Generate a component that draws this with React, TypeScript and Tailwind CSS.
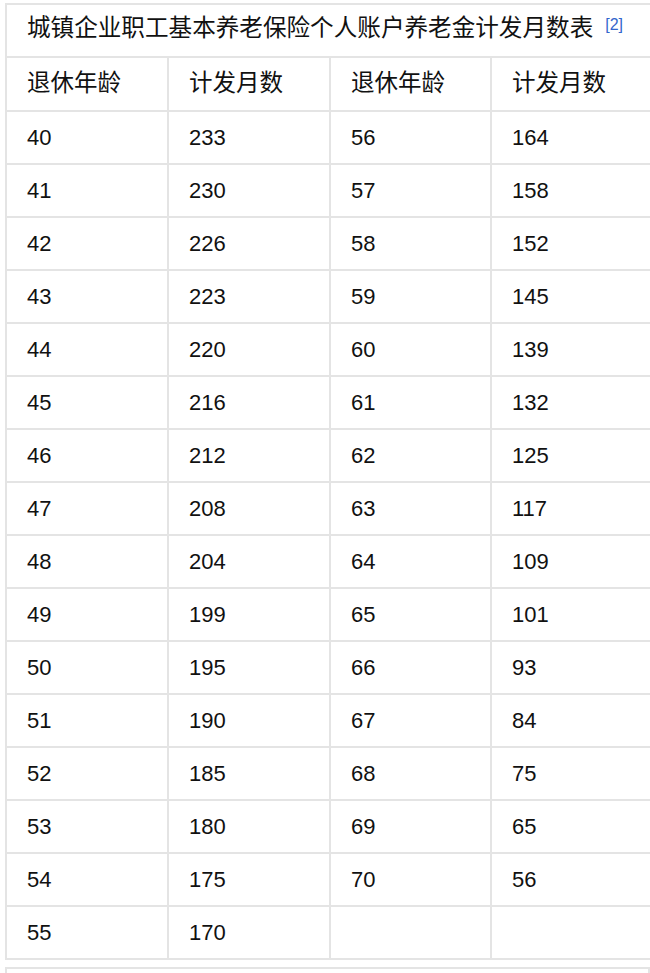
import React from "react";

const left = [
  ["40", "233"], ["41", "230"], ["42", "226"], ["43", "223"], ["44", "220"], ["45", "216"],
  ["46", "212"], ["47", "208"], ["48", "204"], ["49", "199"], ["50", "195"], ["51", "190"],
  ["52", "185"], ["53", "180"], ["54", "175"], ["55", "170"],
];
const right = [
  ["56", "164"], ["57", "158"], ["58", "152"], ["59", "145"], ["60", "139"], ["61", "132"],
  ["62", "125"], ["63", "117"], ["64", "109"], ["65", "101"], ["66", "93"], ["67", "84"],
  ["68", "75"], ["69", "65"], ["70", "56"], ["", ""],
];

const cell = "border-2 border-[#e4e4e4] h-[53px] pl-[20px] pr-2 align-middle text-left font-normal";
const head = cell + " h-[54px] text-[23.5px]";

export default function App() {
  return (
    <div
      className="w-[650px] h-[973px] overflow-hidden bg-white text-[#111] text-[22px] leading-none pt-[3px] pl-[5px]"
      style={{ fontFamily: '"Liberation Sans", Arial, "Noto Sans CJK SC", sans-serif' }}
    >
      <table className="border-collapse table-fixed w-[650px] border-2 border-[#e4e4e4]">
        <colgroup>
          <col className="w-[162px]" />
          <col className="w-[162px]" />
          <col className="w-[161px]" />
          <col className="w-[165px]" />
        </colgroup>
        <tbody>
          <tr>
            <td colSpan={4} className={cell + " h-[52px] whitespace-nowrap pb-[3px]"}>
              <span className="text-[23.6px]">城镇企业职工基本养老保险个人账户养老金计发月数表</span>
              <sup className="ml-[12px] text-[16px] text-[#3366cc] relative top-[-6px]">[2]</sup>
            </td>
          </tr>
          <tr>
            <th className={head}>退休年龄</th>
            <th className={head}>计发月数</th>
            <th className={head}>退休年龄</th>
            <th className={head}>计发月数</th>
          </tr>
          {left.map((l, i) => (
            <tr key={i}>
              <td className={cell}>{l[0]}</td>
              <td className={cell}>{l[1]}</td>
              <td className={cell}>{right[i][0]}</td>
              <td className={cell}>{right[i][1]}</td>
            </tr>
          ))}
        </tbody>
      </table>
      <div className="mt-[7px] h-[20px] border-2 border-b-0 border-[#e4e4e4]" />
    </div>
  );
}
